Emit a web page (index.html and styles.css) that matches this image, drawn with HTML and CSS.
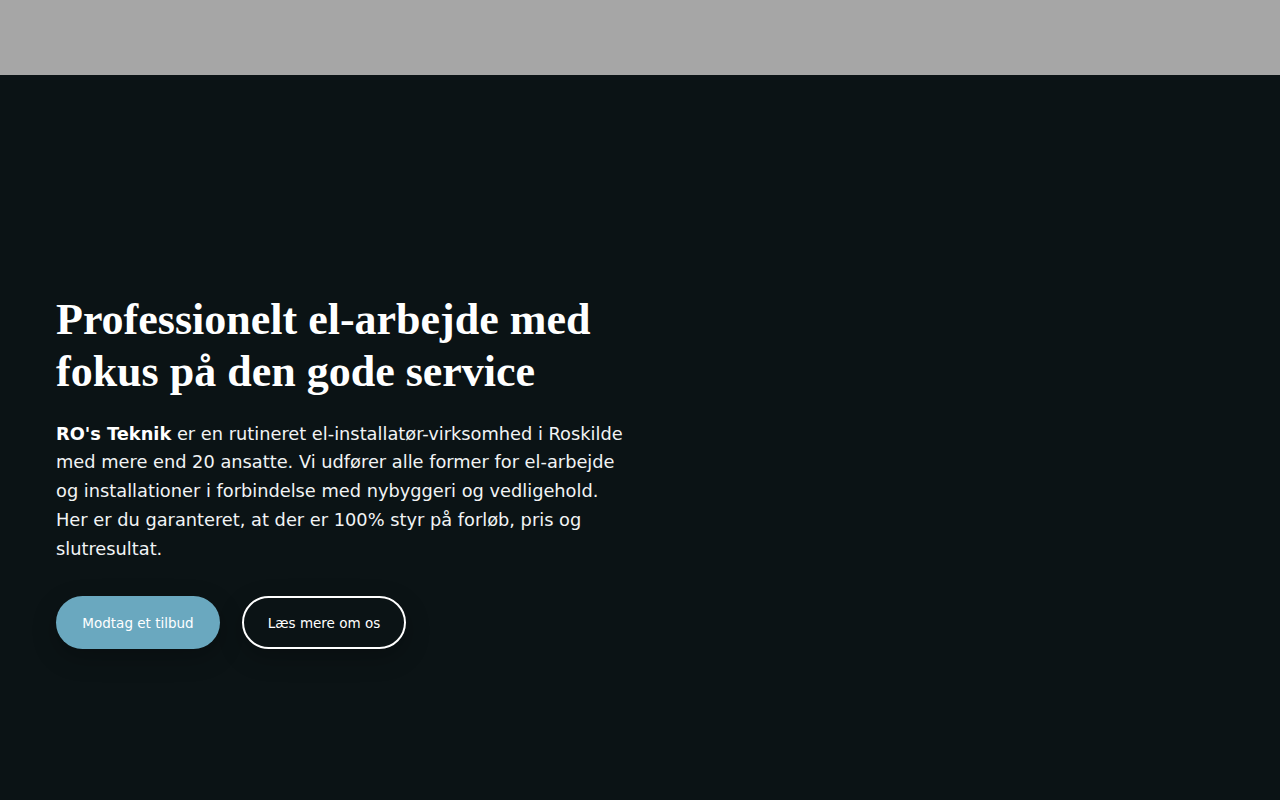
FILE: index.html
```html
<!DOCTYPE html>
<html lang="da">
<head>
  <meta charset="UTF-8" />
  <meta name="viewport" content="width=device-width, initial-scale=1.0" />
  <title>RO's Teknik</title>
  <link rel="stylesheet" href="styles.css">
</head>
<body>
  <!-- Topbar -->
  <header class="topbar"></header>

  <main>
    <section class="hero">
      <div class="hero--content">
        <h1 class="hero--titel">Professionelt el-arbejde med fokus på den gode service</h1>
        <p class="hero--tekst">
          <strong>RO's Teknik</strong> er en rutineret el-installatør-virksomhed i Roskilde
          med mere end 20 ansatte. Vi udfører alle former for el-arbejde og installationer
          i forbindelse med nybyggeri og vedligehold. Her er du garanteret, at der er 100%
          styr på forløb, pris og slutresultat.
        </p>
        <div class="hero--knapper">
          <a href="#" class="knap knap--fyldt">Modtag et tilbud</a>
          <a href="#" class="knap knap--kant">Læs mere om os</a>
        </div>
      </div>
    </section>
  </main>
</body>
</html>
```

FILE: styles.css
```css
* {
  box-sizing: border-box;
  margin: 0;
  padding: 0;
}

body {
  background-color: #0b1315;
  color: #ffffff;
  font-family: 'DejaVu Sans', sans-serif;
}

.topbar {
  height: 75px;
  background-color: #a6a6a6;
}

.hero {
  min-height: 100vh;
  display: flex;
  align-items: center;
  padding: 0 56px 7px;
}

.hero--content {
  width: 572px;
}

.hero--titel {
  font-family: 'Liberation Serif', serif;
  font-weight: 700;
  font-size: 44px;
  line-height: 52px;
  margin-bottom: 22px;
}

.hero--tekst {
  font-size: 17.8px;
  line-height: 28.8px;
  color: #f2f4f5;
  margin-bottom: 33px;
}

.hero--tekst strong {
  font-weight: 700;
  color: #ffffff;
}

.hero--knapper {
  display: flex;
  gap: 22px;
}

.knap {
  display: inline-flex;
  align-items: center;
  justify-content: center;
  width: 164px;
  height: 53px;
  border-radius: 27px;
  font-size: 13.5px;
  color: #ffffff;
  text-decoration: none;
  box-shadow: 0 8px 24px rgba(0, 0, 0, 0.25);
}

.knap--fyldt {
  background-color: #6aa8bf;
}

.knap--kant {
  border: 2px solid #ffffff;
}
```
